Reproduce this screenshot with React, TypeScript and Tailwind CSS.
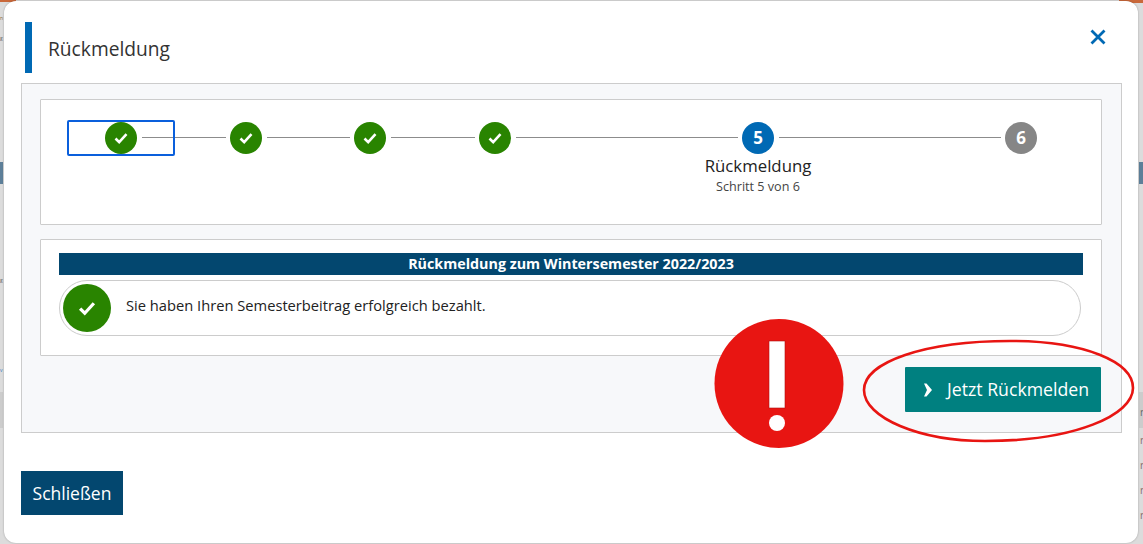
import { FC } from "react";

const CheckIcon: FC<{ size: number }> = ({ size }) => (
  <svg width={size} height={size} viewBox="0 0 16 16" fill="none">
    <path d="M2.5 8.5l3.7 3.7 7.3-8" stroke="#fff" strokeWidth="2.6" />
  </svg>
);

const DoneStep = () => (
  <div className="w-8 h-8 shrink-0 rounded-full bg-[#298400] flex items-center justify-center">
    <CheckIcon size={16} />
  </div>
);

const Line: FC<{ width: string }> = ({ width }) => (
  <div className="h-[30px] flex items-center shrink-0">
    <div className={`h-px bg-[#8c8c8c] ml-[5px] mr-1 ${width}`} />
  </div>
);

const Stepper = () => (
  <div className="h-[126px] border border-[#cccccc] bg-white rounded-[1px] pl-[64px] pt-[22px]">
    <div className="flex items-start">
      <div className="relative">
        <DoneStep />
        <div className="absolute left-[-38px] top-[-2px] w-[108px] h-[36px] border-2 border-[#0a5fdc] rounded-[2px]" />
      </div>
      <Line width="w-[84px]" />
      <DoneStep />
      <Line width="w-[83px]" />
      <DoneStep />
      <Line width="w-[84px]" />
      <DoneStep />
      <Line width="w-[222px]" />
      <div className="w-8 flex flex-col items-center whitespace-nowrap">
        <div className="w-8 h-8 rounded-full bg-[#0069b4] text-white font-bold text-[17px] flex items-center justify-center">5</div>
        <div className="text-[16.8px] leading-[22px] text-[#222] mt-px">Rückmeldung</div>
        <div className="text-[12.6px] leading-[16px] text-[#444] mt-[2px]">Schritt 5 von 6</div>
      </div>
      <Line width="w-[222px]" />
      <div className="w-8 h-8 rounded-full bg-[#868686] text-white font-bold text-[17px] flex items-center justify-center">6</div>
    </div>
  </div>
);

const Status = () => (
  <div className="mt-[14px] h-[117px] border border-[#cccccc] bg-white rounded-[1px] px-[18px] pt-[13px]">
    <div className="h-[22px] bg-[#03476f] text-white text-[14.3px] font-bold leading-[22px] text-center">
      Rückmeldung zum Wintersemester 2022/2023
    </div>
    <div className="mt-[5px] mr-[2px] h-[56px] border border-[#cccccc] rounded-[28px] flex items-center pl-[3px]">
      <div className="w-12 h-12 rounded-full bg-[#298400] flex items-center justify-center">
        <CheckIcon size={20} />
      </div>
      <span className="ml-[15px] mb-[5px] text-[14.7px] text-[#222]">Sie haben Ihren Semesterbeitrag erfolgreich bezahlt.</span>
    </div>
  </div>
);

// what shows of the page behind the dialog, at its left and right edges
const Backdrop = () => (
  <>
    <div className="absolute left-0 top-0 w-[16px] h-[2px] bg-[#c9683a]" />
    <div className="absolute right-0 top-0 w-[24px] h-[3px] bg-[#c9683a]" />
    <div className="absolute left-0 top-[162px] w-[3px] h-[22px] bg-[#5d7f99]" />
    <div className="absolute right-0 top-[162px] w-[4px] h-[22px] bg-[#5d7f99]" />
    <div className="absolute left-0 top-[392px] w-[3px] h-[36px] bg-[#cccccc]" />
    <div className="absolute right-0 top-[392px] w-[4px] h-[36px] bg-[#cccccc]" />
    <span className="absolute left-0 top-[14px] text-[5px] leading-[8px] text-[#8a6a3a]">n</span>
    <span className="absolute left-0 top-[34px] text-[5px] leading-[8px] text-[#666]">g</span>
    <span className="absolute left-0 top-[276px] text-[5px] leading-[8px] text-[#666]">g</span>
    <span className="absolute left-0 top-[366px] text-[5px] leading-[8px] text-[#3b82c4]">v</span>
    <span className="absolute left-[1140px] top-[405px] text-[10px] leading-[14px] text-[#666]">r</span>
    <span className="absolute left-[1140px] top-[433px] text-[10px] leading-[14px] text-[#8a6a6a]">r</span>
    <span className="absolute left-[1140px] top-[458px] text-[10px] leading-[14px] text-[#8a6a6a]">r</span>
    <span className="absolute left-[1140px] top-[483px] text-[10px] leading-[14px] text-[#8a6a6a]">r</span>
    <span className="absolute left-[1140px] top-[508px] text-[10px] leading-[14px] text-[#8a6a6a]">r</span>
  </>
);

const App = () => (
  <div className="relative w-[1143px] h-[544px] overflow-hidden bg-[#dcdcdc] font-['Open_Sans',sans-serif]">
    <Backdrop />

    <div className="absolute left-[4px] top-[1px] w-[1134px] h-[542px] bg-white rounded-[12px] shadow-[0_0_2px_rgba(0,0,0,0.3)] pl-[17px] pr-[16px] flex flex-col">
      <div className="h-[82px] flex items-start">
        <div className="ml-[4px] mt-[21px] w-[7px] h-[51px] bg-[#0069b4]" />
        <h1 className="ml-[16px] mt-[34px] text-[19.2px] leading-[27px] text-[#333] font-normal">Rückmeldung</h1>
        <button className="ml-auto mr-[14px] mt-[26px] text-[#0069b4]">
          <svg width="20" height="20" viewBox="0 0 20 20" fill="none">
            <path d="M3.5 3.5l13 13M16.5 3.5l-13 13" stroke="currentColor" strokeWidth="2.8" />
          </svg>
        </button>
      </div>

      <div className="h-[350px] border border-[#cccccc] bg-[#f7f8fa] pl-[18px] pr-[19px] pt-[15px] flex flex-col">
        <Stepper />
        <Status />
        <div className="mt-[11px] mr-px flex justify-end">
          <button className="h-[45px] w-[196px] bg-[#008080] rounded-[1px] text-white text-[17.7px] flex items-center pl-[18px] whitespace-nowrap">
            <svg width="10" height="14" viewBox="0 0 10 14" className="mr-[14px]">
              <path d="M1 0.5L3.5 0.5L9 7L3.5 13.5L1 13.5L4 7Z" fill="#fff" />
            </svg>
            Jetzt Rückmelden
          </button>
        </div>
      </div>

      <button className="mt-[38px] w-[102px] h-[44px] bg-[#03476f] text-white text-[17.5px]">Schließen</button>
    </div>

    <svg className="absolute left-[714px] top-[318px]" width="131" height="131" viewBox="0 0 131 131">
      <circle cx="65" cy="65.5" r="64.5" fill="#e81512" />
      <rect x="55" y="23" width="16" height="67" fill="#fff" stroke="#b01010" strokeWidth="0.6" />
      <circle cx="63" cy="105" r="8" fill="#fff" />
    </svg>
    <svg className="absolute left-[860px] top-[336px]" width="278" height="110" viewBox="0 0 278 110" fill="none">
      <path d="M4 54C4 26 65 5 150 5C225 5 273 26 273 52C273 79 215 105 125 105C60 105 4 82 4 54Z" stroke="#e81512" strokeWidth="2.6" />
    </svg>
  </div>
);

export default App;
